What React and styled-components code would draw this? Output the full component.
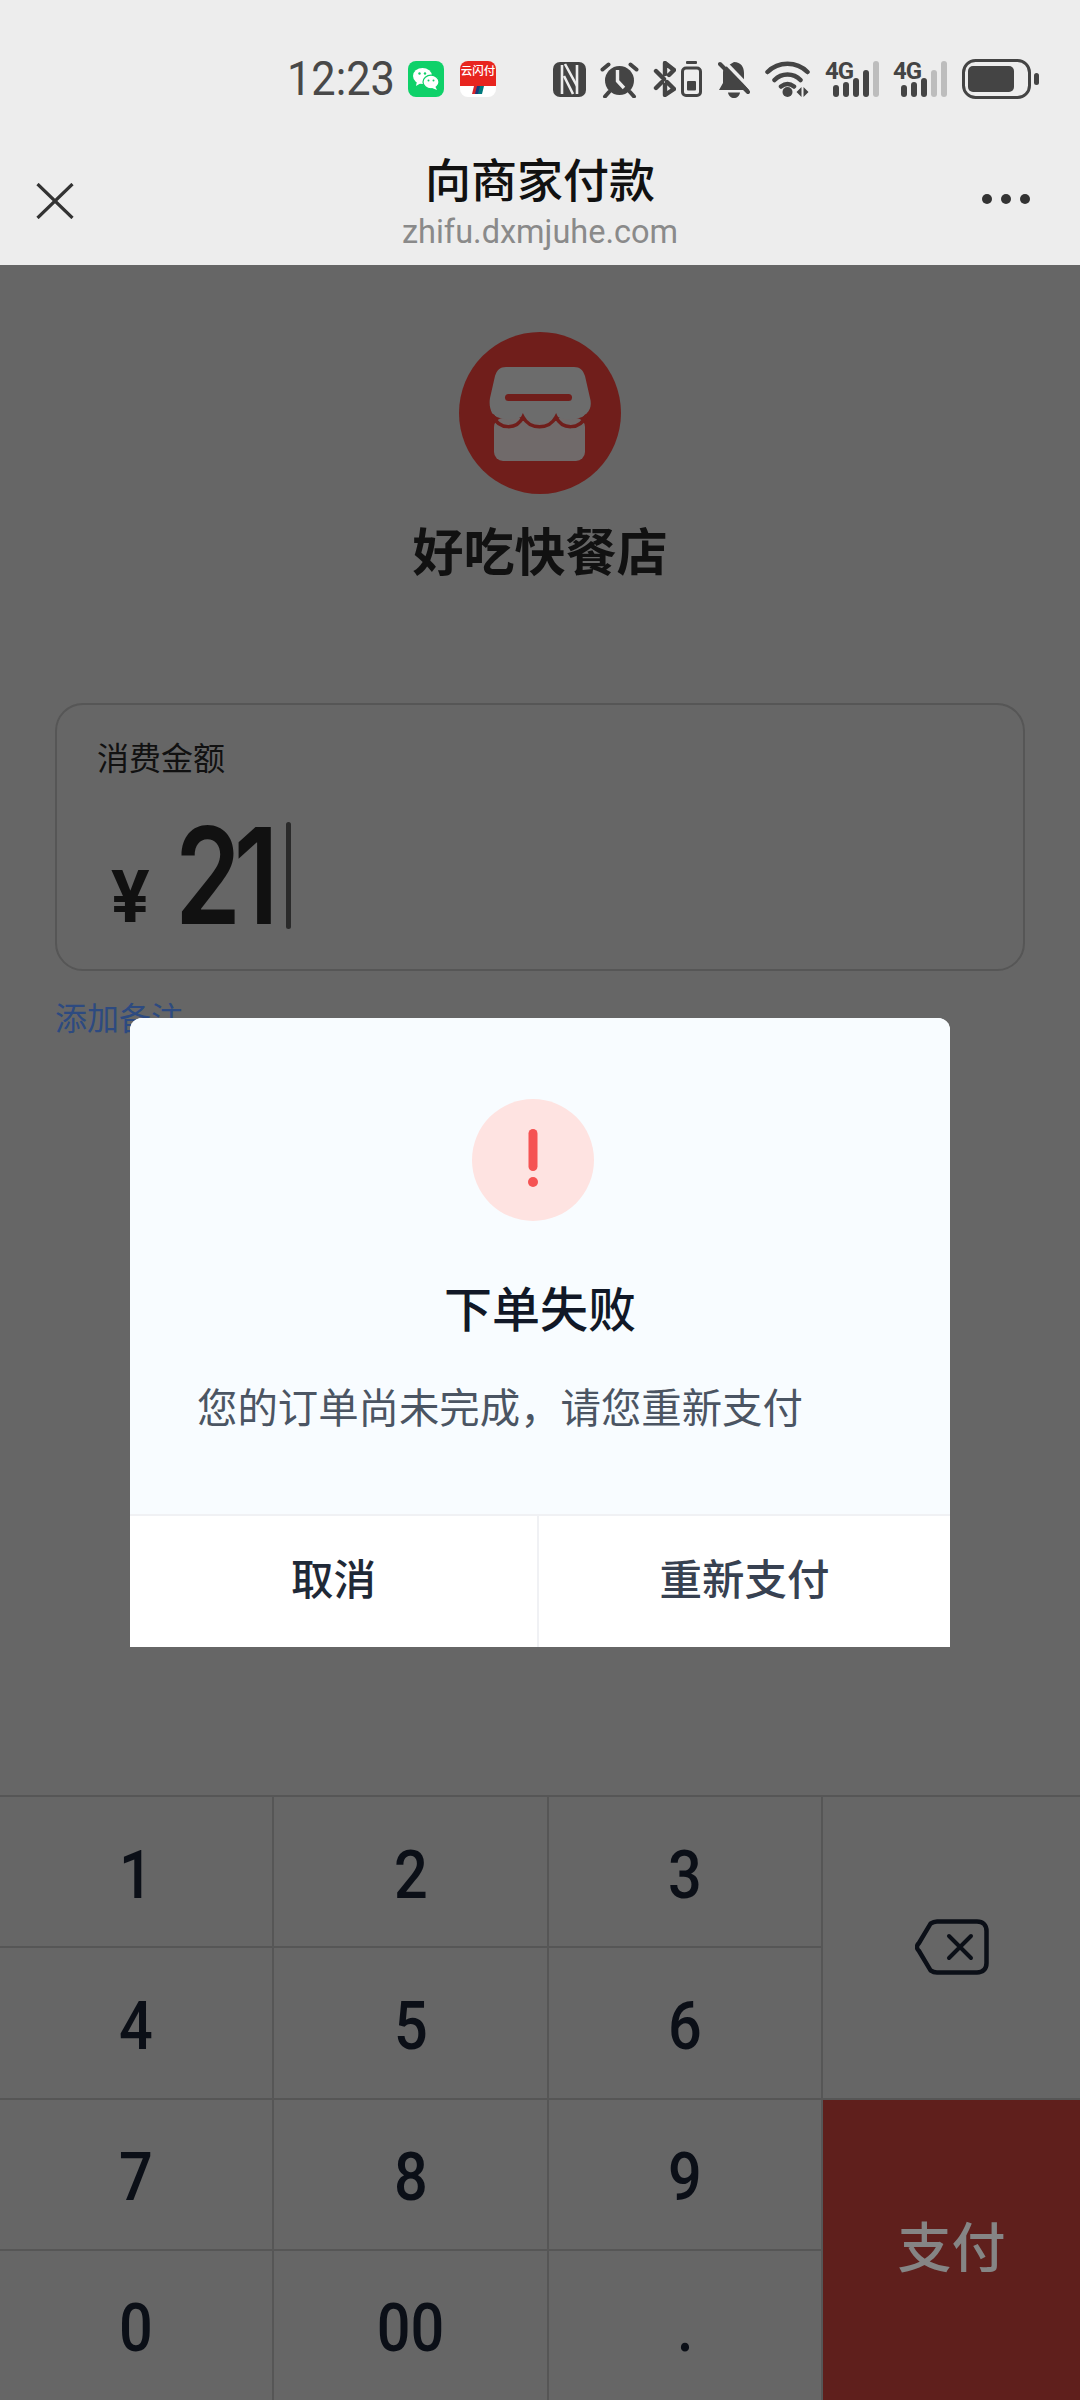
import React from "react";
import styled, { createGlobalStyle } from "styled-components";

const cjk = `"Noto Sans CJK SC", sans-serif`;
const latin = `Roboto, "Noto Sans CJK SC", sans-serif`;
const ICON = "#444444";
const BG = "#ededed";

const Global = createGlobalStyle`
  html, body { margin: 0; padding: 0; background: #666666; }
  * { box-sizing: border-box; }
`;

const Screen = styled.div`
  position: relative;
  width: 1080px;
  height: 2400px;
  overflow: hidden;
  display: flex;
  flex-direction: column;
  background: #666666;
  font-family: ${cjk};
`;

const Top = styled.header`
  height: 265px;
  flex: none;
  background: ${BG};
  display: flex;
  flex-direction: column;
`;

const StatusBar = styled.div`
  display: flex;
  align-items: center;
  height: 40px;
  margin-top: 59px;
  padding-left: 287px;
`;

const Time = styled.span`
  display: inline-block;
  width: 108px;
  font: 400 49px/40px ${latin};
  color: #484848;
  transform: scaleX(0.885);
  transform-origin: left center;
  white-space: nowrap;
`;

const AppBadges = styled.div`
  display: flex;
  gap: 16px;
  margin-left: 13px;
`;

const Badge = styled.div`
  width: 36px;
  height: 36px;
  border-radius: 8px;
  overflow: hidden;
  background: ${(p) => p.$bg};
  display: flex;
  flex-direction: column;
  align-items: center;
`;

const BadgeRed = styled.div`
  width: 100%;
  height: 25px;
  background: #e8251f;
  color: #fff;
  font: 500 11.5px/18px ${cjk};
  text-align: center;
  white-space: nowrap;
`;

const SysIcons = styled.div`
  display: flex;
  align-items: center;
  margin-left: 57px;
`;

const SysIcon = styled.svg`
  flex: none;
  display: block;
  margin-left: ${(p) => p.$gap || 0}px;
`;

const SignalWrap = styled.div`
  position: relative;
  flex: none;
  width: 54px;
  height: 38px;
  margin-left: ${(p) => p.$gap}px;
`;

const SignalLabel = styled.span`
  position: absolute;
  left: 0;
  top: 0;
  font: 700 24px/22px ${latin};
  letter-spacing: -1px;
  color: ${ICON};
`;

const NavBar = styled.div`
  position: relative;
  flex: 1;
  display: flex;
  align-items: flex-start;
  justify-content: space-between;
  padding: 84px 50px 0 36px;
`;

const NavTitles = styled.div`
  position: absolute;
  left: 0;
  right: 0;
  top: 47px;
  display: flex;
  flex-direction: column;
  align-items: center;
`;

const NavTitle = styled.div`
  font: 500 46px/62px ${cjk};
  color: #111111;
`;

const NavSub = styled.div`
  font: 400 32.5px/36px ${latin};
  color: #8a8a8a;
  margin-top: 6px;
`;

const Dots = styled.div`
  display: flex;
  gap: 9px;
  margin-top: 11px;
`;

const Dot = styled.span`
  width: 10px;
  height: 10px;
  border-radius: 50%;
  background: #333333;
`;

const Main = styled.main`
  flex: 1;
  display: flex;
  flex-direction: column;
  padding: 67px 55px 0;
`;

const Merchant = styled.div`
  display: flex;
  flex-direction: column;
  align-items: center;
`;

const MerchantName = styled.div`
  margin-top: 20px;
  font: 700 51px/70px ${cjk};
  color: #111111;
`;

const AmountCard = styled.section`
  margin-top: 119px;
  height: 268px;
  border: 2px solid #565656;
  border-radius: 28px;
  padding: 29px 40px 0;
`;

const AmountLabel = styled.div`
  font: 400 32px/44px ${cjk};
  color: #111111;
`;

const AmountRow = styled.div`
  display: flex;
  align-items: flex-end;
  height: 107px;
  margin-top: 44px;
  margin-left: 14px;
`;

const Yen = styled.span`
  display: inline-block;
  width: 64px;
  font: 700 72px/50px ${latin};
  color: #111111;
  margin-bottom: 6px;
`;

const AmountValue = styled.span`
  display: inline-block;
  width: 111px;
  font: 600 134px/107px Inter, ${latin};
  letter-spacing: -9px;
  color: #111111;
  transform: scaleX(0.79);
  transform-origin: left bottom;
  white-space: nowrap;
`;

const Caret = styled.span`
  width: 5px;
  height: 107px;
  border-radius: 3px;
  background: #2a2a2a;
`;

const NoteLink = styled.div`
  margin-top: 23px;
  font: 400 32px/44px ${cjk};
  color: #2d4a80;
`;

const Keypad = styled.div`
  flex: none;
  height: 605px;
  border-top: 2px solid #565656;
  background: #565656;
  display: grid;
  grid-template-columns: 272px 273px 272px 1fr;
  grid-template-rows: repeat(4, 1fr);
  gap: 2px;
`;

const Key = styled.div`
  background: #666666;
  display: flex;
  align-items: center;
  justify-content: center;
  color: #0b0f17;
  font: 500 66px/1 ${latin};
  padding-top: 8px;
`;

const KeyGlyph = styled.span`
  display: inline-block;
  transform: scaleX(0.9);
`;

const BackKey = styled(Key)`
  grid-column: 4;
  grid-row: 1 / span 2;
  padding-top: 0;
`;

const PayKey = styled(Key)`
  grid-column: 4;
  grid-row: 3 / span 2;
  background: #5f1f1c;
  color: #858585;
  font: 500 54px/1 ${cjk};
  padding: 0 0 10px;
`;

const Dialog = styled.div`
  position: absolute;
  left: 130px;
  top: 1018px;
  width: 820px;
  height: 629px;
  border-radius: 12px 12px 0 0;
  overflow: hidden;
  display: flex;
  flex-direction: column;
  background: #ffffff;
`;

const DialogBody = styled.div`
  flex: 1;
  background: #f8fcff;
  display: flex;
  flex-direction: column;
  align-items: center;
  padding-top: 81px;
`;

const AlertIcon = styled.svg`
  display: block;
  margin-right: 14px;
`;

const DialogTitle = styled.div`
  margin-top: 55px;
  font: 500 48px/60px ${cjk};
  color: #111827;
`;

const DialogText = styled.div`
  align-self: flex-start;
  margin-top: 42px;
  padding-left: 67px;
  font: 400 40.4px/56px ${cjk};
  color: #4b5563;
`;

const DialogActions = styled.div`
  flex: none;
  height: 133px;
  display: grid;
  grid-template-columns: 407px 1fr;
  border-top: 2px solid #f0f1f4;
`;

const DialogButton = styled.div`
  display: flex;
  align-items: center;
  justify-content: center;
  padding-bottom: 8px;
  font: 500 42.5px/1 ${cjk};
  color: ${(p) => p.$color};
  & + & {
    border-left: 2px solid #f0f1f4;
  }
`;

function Signal({ dark, gap }) {
  const heights = [12, 15, 19, 27, 36];
  return (
    <SignalWrap $gap={gap}>
      <SignalLabel>4G</SignalLabel>
      <svg width="54" height="38" viewBox="0 0 54 38">
        {heights.map((h, i) => (
          <rect key={i} x={8 + i * 10} y={37 - h} width="6" height={h} rx="3" fill={i < dark ? ICON : "#bdbdbd"} />
        ))}
      </svg>
    </SignalWrap>
  );
}

const keys = ["1", "2", "3", "4", "5", "6", "7", "8", "9", "0", "00", "."];

export default function App() {
  return (
    <Screen>
      <Global />
      <Top>
        <StatusBar>
          <Time>12:23</Time>
          <AppBadges>
            <Badge $bg="#0fd169">
              <svg width="36" height="36" viewBox="0 0 36 36">
                <ellipse cx="14.5" cy="15" rx="9.5" ry="8" fill="#fff" />
                <path d="M9 20l-1 5 5-3z" fill="#fff" />
                <ellipse cx="23" cy="21" rx="8" ry="6.8" fill="#fff" stroke="#0fd169" strokeWidth="1.2" />
                <path d="M27 25l2 4-5-2z" fill="#fff" />
                <circle cx="11.5" cy="12.5" r="1.2" fill="#0fd169" />
                <circle cx="17" cy="12.5" r="1.2" fill="#0fd169" />
                <circle cx="20.5" cy="19.5" r="1" fill="#0fd169" />
                <circle cx="25.5" cy="19.5" r="1" fill="#0fd169" />
              </svg>
            </Badge>
            <Badge $bg="#ffffff">
              <BadgeRed>云闪付</BadgeRed>
              <svg width="12" height="8" viewBox="0 0 12 8">
                <path d="M2 0h4L4 8H0z" fill="#d8232a" />
                <path d="M5 0h4L7 8H3z" fill="#1b3a7a" />
                <path d="M8 0h4l-2 8H6z" fill="#00797c" />
              </svg>
            </Badge>
          </AppBadges>
          <SysIcons>
            <SysIcon width="33" height="35" viewBox="0 0 33 35">
              <rect width="33" height="35" rx="7" fill={ICON} />
              <path d="M9 3v29M24 3v29" stroke={BG} strokeWidth="2.6" />
              <path d="M12 2l12 22M11 14l9 18" stroke={BG} strokeWidth="2.6" fill="none" />
            </SysIcon>
            <SysIcon $gap={14} width="39" height="37" viewBox="0 0 39 37">
              <circle cx="19.5" cy="19.5" r="14.500" fill={ICON} />
              <path d="M17.500 9v11l6.500 7" stroke={BG} strokeWidth="3.4" fill="none" />
              <path d="M2.500 8.500l6-5M36.500 8.500l-6-5M9 31l-4 4.500M30 31l4 4.500" stroke={ICON} strokeWidth="4" strokeLinecap="round" />
            </SysIcon>
            <SysIcon $gap={14} width="23" height="36" viewBox="0 0 23 36">
              <path d="M3 10l8 8M14 21l7 7-9 6V24M12 13V2l9 7-5 5M3 27l6-6" stroke={ICON} strokeWidth="4.400" fill="none" strokeLinejoin="round" strokeLinecap="round" />
            </SysIcon>
            <SysIcon $gap={5} width="21" height="36" viewBox="0 0 21 36">
              <rect x="5" y="0" width="11" height="3" rx="1" fill={ICON} />
              <rect x="1.500" y="7" width="18" height="27.500" rx="3.500" fill="none" stroke={ICON} strokeWidth="3" />
              <rect x="6" y="20" width="9" height="9.500" rx="1" fill={ICON} />
            </SysIcon>
            <SysIcon $gap={16} width="32" height="37" viewBox="0 0 32 37">
              <path d="M16 1c7 0 10 5 10 11v10l5 7H1l4-7V12c0-2 .3-3.500 1-5z" fill={ICON} />
              <path d="M10 31.500h12c-.5 3.500-3 5.500-6 5.500s-5.500-2-6-5.500z" fill={ICON} />
              <path d="M6 0l26 27" stroke={BG} strokeWidth="3.500" />
              <path d="M2 3l28 28" stroke={ICON} strokeWidth="4" strokeLinecap="round" />
            </SysIcon>
            <SysIcon $gap={15} width="45" height="38" viewBox="0 0 45 38">
              <path d="M2.500 12c11-11 29-11 40 0M9.500 20c7-7.500 19-7.500 26 0M16 26.500c4-3 9-3 13 0" stroke={ICON} strokeWidth="4.500" fill="none" strokeLinecap="round" />
              <circle cx="22.500" cy="32" r="5" fill={ICON} />
              <path d="M36.500 27v10l-5-5zM38.500 27l5 5-5 5z" fill={ICON} />
            </SysIcon>
            <Signal dark={4} gap={15} />
            <Signal dark={3} gap={14} />
            <SysIcon $gap={15} width="77" height="40" viewBox="0 0 77 40">
              <rect x="1.500" y="1.500" width="66" height="37" rx="12" fill="none" stroke={ICON} strokeWidth="3" />
              <rect x="6" y="7" width="46" height="26" rx="5" fill={ICON} />
              <rect x="72" y="14" width="5" height="12" rx="2.500" fill={ICON} />
            </SysIcon>
          </SysIcons>
        </StatusBar>
        <NavBar>
          <svg width="38" height="36" viewBox="0 0 38 36">
            <path d="M1.500 1l35 34M36.500 1l-35 34" stroke="#333333" strokeWidth="3.200" />
          </svg>
          <NavTitles>
            <NavTitle>向商家付款</NavTitle>
            <NavSub>zhifu.dxmjuhe.com</NavSub>
          </NavTitles>
          <Dots>
            <Dot />
            <Dot />
            <Dot />
          </Dots>
        </NavBar>
      </Top>
      <Main>
        <Merchant>
          <svg width="162" height="162" viewBox="0 0 162 162">
            <circle cx="81" cy="81" r="81" fill="#701e1b" />
            <rect x="35" y="86" width="91" height="43" rx="9" fill="#706a6a" />
            <path d="M47 35h68c6 0 9 3 11 9l5 22c2 7 0 12-3 15-5 7-22 9-31 3-8 8-26 8-33 0-9 6-26 4-31-3-2-4-3-9-2-15l5-22c2-6 5-9 11-9z" fill="#6c6c6c" />
            <path d="M34 84c6 14 24 14 30 1 7 13 26 13 33 0 6 13 24 13 30-1" fill="none" stroke="#701e1b" strokeWidth="3.500" strokeLinecap="round" />
            <rect x="46" y="62" width="67" height="7" rx="3.500" fill="#701e1b" />
          </svg>
          <MerchantName>好吃快餐店</MerchantName>
        </Merchant>
        <AmountCard>
          <AmountLabel>消费金额</AmountLabel>
          <AmountRow>
            <Yen>¥</Yen>
            <AmountValue>21</AmountValue>
            <Caret />
          </AmountRow>
        </AmountCard>
        <NoteLink>添加备注</NoteLink>
      </Main>
      <Keypad>
        {keys.map((k) => (
          <Key key={k}>
            <KeyGlyph>{k}</KeyGlyph>
          </Key>
        ))}
        <BackKey>
          <svg width="74" height="56" viewBox="0 0 74 56">
            <path d="M22 2.500h40c6 0 9.500 3.500 9.500 9.500v32c0 6-3.500 9.500-9.500 9.500H22c-2.500 0-4.500-.8-6.500-2.200L4 32c-2.800-2.500-2.800-5.500 0-8L15.500 4.700C17.500 3.300 19.500 2.500 22 2.500z" fill="none" stroke="#0b0f17" strokeWidth="4.500" />
            <path d="M34 17l22 22M56 17L34 39" stroke="#0b0f17" strokeWidth="4" strokeLinecap="round" />
          </svg>
        </BackKey>
        <PayKey>支付</PayKey>
      </Keypad>
      <Dialog>
        <DialogBody>
          <AlertIcon width="122" height="122" viewBox="0 0 122 122">
            <circle cx="61" cy="61" r="61" fill="#fee3e1" />
            <rect x="56.500" y="30" width="9" height="42" rx="4.500" fill="#f55353" />
            <circle cx="61" cy="83" r="5" fill="#f55353" />
          </AlertIcon>
          <DialogTitle>下单失败</DialogTitle>
          <DialogText>您的订单尚未完成，请您重新支付</DialogText>
        </DialogBody>
        <DialogActions>
          <DialogButton $color="#1f2937">取消</DialogButton>
          <DialogButton $color="#374151">重新支付</DialogButton>
        </DialogActions>
      </Dialog>
    </Screen>
  );
}
